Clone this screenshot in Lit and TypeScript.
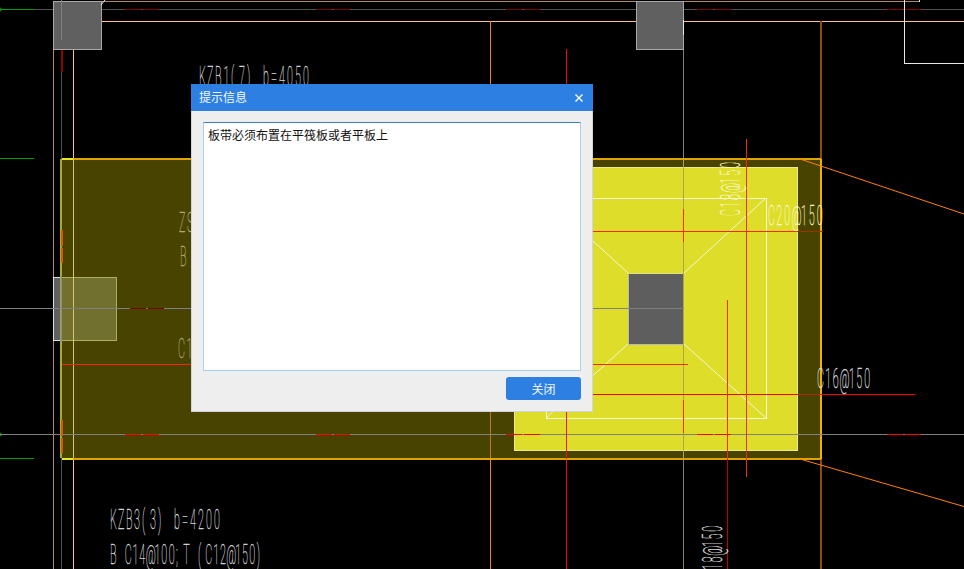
import { LitElement, html, svg, css } from "lit";
import { customElement } from "lit/decorators.js";

type L = [number, number, number, number, string, number?];

const GRID = "#808080";
const RED = "#ff0000";
const HOT = "#ff2800";
const DARK = "#800000";
const PEACH = "#ffc080";
const TAN = "#b08c60";
const ORANGE = "#ff8000";
const BROWN = "#8c5000";

function dashes(y: number, color: string, xs: number[]): L[] {
  const out: L[] = [];
  for (const x of xs) {
    out.push([x, y, x + 16, y, color], [x + 18, y, x + 34, y, color]);
  }
  return out;
}

/* lines that the plate and the footing sit on top of */
const under: L[] = [
  [101, 1.5, 919, 1.5, TAN],
  [0, 9.5, 964, 9.5, "#505050"],
  [101, 21.5, 964, 21.5, PEACH],
  [53.5, 49, 53.5, 569, TAN],
  [61.5, 49, 61.5, 159, "#505050"],
  [61.5, 459, 61.5, 569, "#555555"],
  [73.5, 49, 73.5, 159, PEACH],
  [73.5, 459, 73.5, 569, PEACH],
  [490.5, 21, 490.5, 159, ORANGE],
  [490.5, 459, 490.5, 569, ORANGE],
  [566.5, 49, 566.5, 159, RED],
  [566.5, 459, 566.5, 569, RED],
  [820.5, 21, 820.5, 159, BROWN, 2],
  [820.5, 459, 820.5, 569, BROWN, 2],
  [683.5, 49, 683.5, 159, GRID],
  [683.5, 459, 683.5, 569, GRID],
  [0, 9.5, 34, 9.5, "#00a000"],
  [0, 158.5, 34, 158.5, "#00a000"],
  [0, 458.5, 34, 458.5, "#00a000"],
  [61.5, 50, 61.5, 72, "#900000", 2],
  ...dashes(9.5, DARK, [125, 316, 506, 697, 887]),
];

/* lines lying over the plate */
const over: L[] = [
  [61, 159, 61, 458, "#a8a838", 2],
  [73.5, 159, 73.5, 458, "#d8c860"],
  [490.5, 159, 490.5, 458, "#c07808"],
  [683.5, 159, 683.5, 458, "#a8a850"],
  [0, 308.5, 684, 308.5, GRID],
  [0, 434.5, 964, 434.5, GRID],
  [61.5, 277, 61.5, 341, "#8888a0"],
  ...dashes(308.5, DARK, [130, 321, 511]),
  ...dashes(434.5, RED, [125, 316, 506, 697, 887]),
  [61.5, 230, 61.5, 246, "#d85800", 2],
  [61.5, 248, 61.5, 263, "#d85800", 2],
  [61.5, 420, 61.5, 436, "#d85800", 2],
  [61.5, 438, 61.5, 453, "#d85800", 2],
  [683.5, 209, 683.5, 242, HOT],
  [683.5, 400, 683.5, 433, HOT],
  [62, 364.5, 688, 364.5, HOT],
  [593, 231.5, 797, 231.5, HOT],
  [797, 231.5, 823, 231.5, "#a03000"],
  [593, 394.5, 797, 394.5, RED],
  [797, 394.5, 821, 394.5, "#a83000"],
  [821, 394.5, 915, 394.5, RED],
  [746.5, 139, 746.5, 477, HOT],
  [727.5, 300, 727.5, 459, HOT],
  [727.5, 459, 727.5, 569, "#c00000"],
  [566.5, 159, 566.5, 459, "#ff1000"],
];

type T = { t: string; x: number; y: number; w: number; c: string; r?: boolean };
const labels: T[] = [
  { t: "KZB1(7) b=4050", x: 199, y: 86, w: 112, c: "#d8d8d8" },
  { t: "KZB3(3) b=4200", x: 110, y: 529, w: 112, c: "#d8d8d8" },
  { t: "B C14@100;T (C12@150)", x: 110, y: 564, w: 154, c: "#d8d8d8" },
  { t: "ZS", x: 179, y: 232, w: 16, c: "#b0b068" },
  { t: "B", x: 180, y: 266, w: 8, c: "#b0b068" },
  { t: "C1", x: 178, y: 358, w: 16, c: "#b0b068" },
  { t: "C18@150", x: 740, y: 216, w: 56, c: "#fafad0", r: true },
  { t: "C18@150", x: 722, y: 578, w: 54, c: "#e0e0e0", r: true },
  { t: "C20@150", x: 768, y: 225, w: 57, c: "#fafad0" },
  { t: "C16@150", x: 817, y: 388, w: 55, c: "#e0e0e0" },
];

const SX = 0.4;

function seg(l: L) {
  return svg`<line class="seg" x1=${l[0]} y1=${l[1]} x2=${l[2]} y2=${l[3]} stroke=${l[4]} stroke-width=${l[5] ?? 1}></line>`;
}

function label(l: T) {
  const pitch = l.w / l.t.length;
  const xs = Array.from(l.t, (ch, i) => {
    const nudge = ch === "@" ? -1 : ch === "1" ? 0.5 : 0;
    return ((i * pitch + nudge) / SX).toFixed(1);
  }).join(" ");
  const place = l.r
    ? `translate(${l.x} ${l.y}) rotate(-90) scale(${SX} 1)`
    : `translate(${l.x} ${l.y}) scale(${SX} 1)`;
  return svg`<text class="cad" transform=${place} x=${xs} fill=${l.c} stroke=${l.c}>${l.t}</text>`;
}

@customElement("app-root")
export class AppRoot extends LitElement {
  static styles = css`
    :host {
      display: block;
      position: relative;
      width: 964px;
      height: 569px;
      overflow: hidden;
      background: #000;
    }
    .canvas {
      display: block;
    }
    .seg {
      shape-rendering: crispEdges;
    }
    .box {
      shape-rendering: crispEdges;
    }
    .diag {
      stroke-width: 1;
      fill: none;
    }
    .cad {
      font-family: "Roboto", "Liberation Sans", sans-serif;
      font-weight: 100;
      font-size: 27px;
      stroke-width: 0.35;
    }
    .dialog {
      position: absolute;
      left: 191px;
      top: 84px;
      width: 402px;
      height: 328px;
      box-sizing: border-box;
      display: flex;
      flex-direction: column;
      background: #eeeeee;
      border: 1px solid #cfd6de;
      border-top: 0;
      font-family: "Noto Sans CJK SC", "Liberation Sans", sans-serif;
      font-size: 12px;
    }
    .title {
      height: 27px;
      margin: 0 -1px;
      flex: none;
      display: flex;
      align-items: center;
      justify-content: space-between;
      padding: 0 10px 0 8px;
      background: #2d80e1;
      color: #f4f8fe;
    }
    .title-text {
      margin-bottom: 2px;
    }
    .close {
      display: block;
      width: 8px;
      height: 8px;
    }
    .body {
      flex: 1;
      display: flex;
      flex-direction: column;
      gap: 6px;
      padding: 11px 11px 11px 11px;
    }
    .message {
      height: 249px;
      box-sizing: border-box;
      background: #fff;
      border: 1px solid #a9d0ec;
      border-top-color: #3a82bd;
      padding: 2px 4px;
      color: #111;
      line-height: 20px;
    }
    .footer {
      display: flex;
      justify-content: flex-end;
    }
    .btn {
      width: 75px;
      height: 23px;
      border-radius: 3px;
      background: #2d80e1;
      color: #f4f8fe;
      display: flex;
      align-items: center;
      justify-content: center;
    }
  `;

  render() {
    return html`
      <svg class="canvas" width="964" height="569" viewBox="0 0 964 569">
        ${under.map(seg)}
        <circle cx="0" cy="9.5" r="2" fill="#008000"></circle>
        <circle cx="0" cy="434.5" r="2" fill="#008000"></circle>

        <rect class="box" x="53.5" y="1.5" width="48" height="48" fill="#606060" stroke="#a8a8a8"></rect>
        <line class="seg" x1="61.5" y1="0" x2="61.5" y2="40" stroke="#808080"></line>
        <rect class="box" x="636" y="1.5" width="47.5" height="47.5" fill="#606060" stroke="#a8a8a8"></rect>
        <line class="seg" x1="683.5" y1="20" x2="683.5" y2="35" stroke="#e8e8e8"></line>
        <path class="diag" d="M101 5 L105 0" stroke="#e8e8e8"></path>

        <path class="box" d="M904.5 0 V63.5 H964" fill="none" stroke="#e8e8e8"></path>
        <line class="seg" x1="919.5" y1="0" x2="919.5" y2="2" stroke="#e8e8e8"></line>

        <rect class="box" x="61" y="159" width="760" height="299.5" fill="#484400"></rect>
        <rect class="box" x="62" y="158" width="759" height="2" fill="#e0a400"></rect>
        <rect class="box" x="62" y="458" width="759" height="2" fill="#e0a400"></rect>
        <rect class="box" x="62" y="158" width="11" height="2" fill="#e8e820"></rect>
        <rect class="box" x="62" y="458" width="11" height="2" fill="#e8e820"></rect>
        <rect class="box" x="820" y="159" width="2" height="300" fill="#f0b000"></rect>

        <rect class="box" x="514.5" y="167" width="283" height="283" fill="#dedd2a" stroke="#ecea90"></rect>

        <path class="diag" d="M800 159 L964 214" stroke=${ORANGE}></path>
        <path class="diag" d="M800 459 L964 506.5" stroke=${ORANGE}></path>

        <rect class="box" x="546" y="198" width="220" height="220" fill="none" stroke="#f6f6d8"></rect>
        <path class="diag" d="M766 198 L684 273 M684 344 L766 418 M628 344 L546 418 M628 273 L546 198" stroke="#f6f6d8"></path>

        <rect class="box" x="53.5" y="277.5" width="8" height="63" fill="#606060" stroke="#e0e0e0"></rect>
        <rect class="box" x="61.5" y="277.5" width="55" height="63" fill="#72702f" stroke="#b0ae60"></rect>
        <rect class="box" x="628.5" y="273.5" width="55" height="70.5" fill="#5e5e5e" stroke="#b8b8b8"></rect>
        <line class="seg" x1="628" y1="273.5" x2="684" y2="273.5" stroke="#e0e080"></line>

        ${over.map(seg)}

        ${labels.map(label)}
      </svg>

      <div class="dialog">
        <div class="title">
          <span class="title-text">提示信息</span>
          <svg class="close" viewBox="0 0 8 8">
            <path d="M0.5 0.5 L7.5 7.5 M7.5 0.5 L0.5 7.5" stroke="#fff" stroke-width="1.4" fill="none"></path>
          </svg>
        </div>
        <div class="body">
          <div class="message">板带必须布置在平筏板或者平板上</div>
          <div class="footer"><div class="btn">关闭</div></div>
        </div>
      </div>
    `;
  }
}
